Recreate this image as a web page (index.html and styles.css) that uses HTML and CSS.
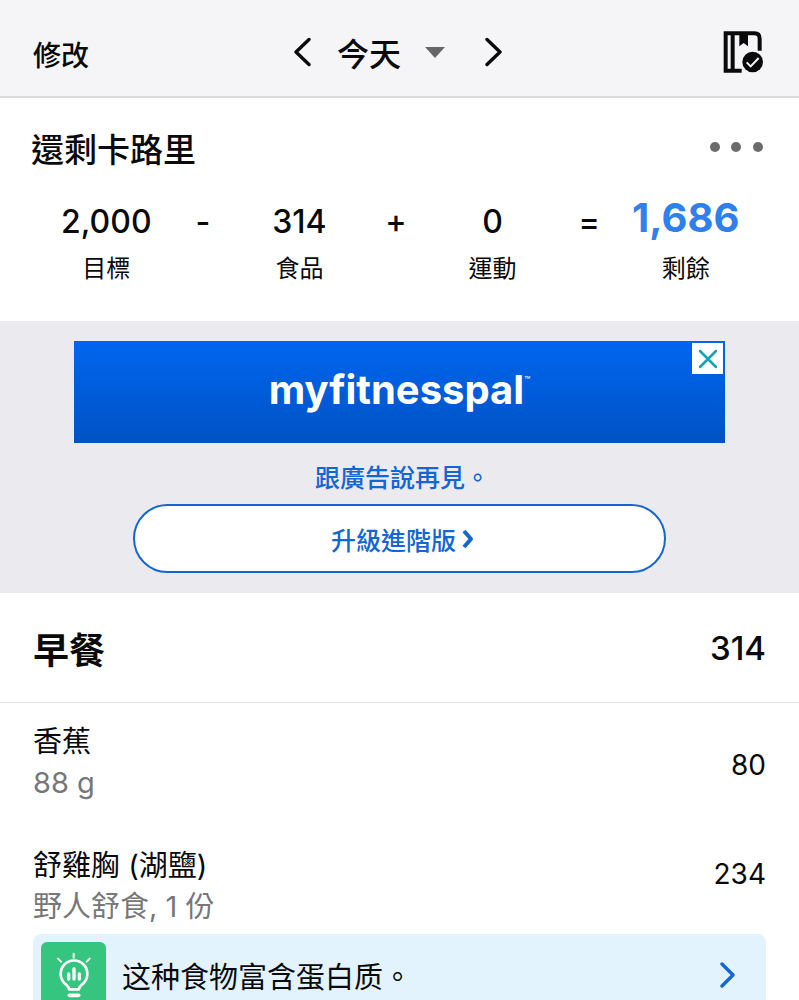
FILE: index.html
```html
<!DOCTYPE html>
<html lang="zh-Hant">
<head>
  <meta charset="UTF-8" />
  <meta name="viewport" content="width=device-width, initial-scale=1" />
  <title>日記</title>
  <link rel="stylesheet" href="styles.css">
</head>
<body>
  <header class="topbar">
    <button class="edit-btn" type="button">修改</button>
    <nav class="date-nav">
      <button type="button" aria-label="前一天">
        <svg width="18" height="30" viewBox="0 0 18 30"><path d="M16 2.500L3 15l13 12.500" fill="none" stroke="#0a0a0a" stroke-width="3.400" stroke-linecap="round" stroke-linejoin="round"/></svg>
      </button>
      <button class="date-btn" type="button">
        今天
        <svg width="20" height="11" viewBox="0 0 20 11"><path d="M0 0h20L10 11z" fill="#666"/></svg>
      </button>
      <button type="button" aria-label="後一天">
        <svg width="18" height="30" viewBox="0 0 18 30"><path d="M2 2.500L15 15 2 27.500" fill="none" stroke="#0a0a0a" stroke-width="3.400" stroke-linecap="round" stroke-linejoin="round"/></svg>
      </button>
    </nav>
    <button class="diary-btn" type="button" aria-label="完成日記">
      <svg width="40" height="42" viewBox="0 0 120 126">
        <path d="M8 7h86q16 0 16 16v36M8 1v124M29 6v114M2 119h54" fill="none" stroke="#0a0a0a" stroke-width="12"/>
        <path d="M49 8h26v38L62 36 49 46z" fill="#0a0a0a"/>
        <circle cx="89" cy="93" r="37" fill="#f5f5f7"/>
        <circle cx="89" cy="93" r="31" fill="#0a0a0a"/>
        <path d="M71 94l12 12 24-25" fill="none" stroke="#f5f5f7" stroke-width="6"/>
      </svg>
    </button>
  </header>

  <section class="summary">
    <div class="summary-head">
      <h2>還剩卡路里</h2>
      <button class="more-btn" type="button" aria-label="更多">
        <svg width="54" height="10" viewBox="0 0 54 10" fill="#6b6b6b"><circle cx="5" cy="5" r="5"/><circle cx="26" cy="5" r="5"/><circle cx="48" cy="5" r="5"/></svg>
      </button>
    </div>
    <div class="equation">
      <div class="stat"><strong>2,000</strong><span>目標</span></div>
      <span class="op">-</span>
      <div class="stat"><strong>314</strong><span>食品</span></div>
      <span class="op">+</span>
      <div class="stat"><strong>0</strong><span>運動</span></div>
      <span class="op">=</span>
      <div class="stat left"><strong>1,686</strong><span>剩餘</span></div>
    </div>
  </section>

  <section class="promo">
    <div class="banner">
      <span class="brand">myfitnesspal<sup>™</sup></span>
      <button class="close-btn" type="button" aria-label="關閉廣告">
        <svg width="20" height="20" viewBox="0 0 20 20"><path d="M2 2l16 16M18 2L2 18" stroke="#13a3b5" stroke-width="2.500" stroke-linecap="round"/></svg>
      </button>
    </div>
    <p>跟廣告說再見。</p>
    <button class="upgrade-btn" type="button">
      升級進階版
      <svg width="12" height="20" viewBox="0 0 12 20"><path d="M2 2l7 8-7 8" fill="none" stroke="#1467d2" stroke-width="4" stroke-linejoin="round"/></svg>
    </button>
  </section>

  <main class="meal">
    <div class="meal-head">
      <h2>早餐</h2>
      <span>314</span>
    </div>
    <div class="food">
      <div class="food-text">
        <h3>香蕉</h3>
        <p>88 g</p>
      </div>
      <span class="food-cal">80</span>
    </div>
    <div class="food with-tip">
      <div class="food-text">
        <h3>舒雞胸 (湖鹽)</h3>
        <p>野人舒食, 1 份</p>
      </div>
      <span class="food-cal">234</span>
    </div>
    <button class="tip" type="button">
      <span class="tip-icon">
        <svg width="36" height="46" viewBox="0 0 108 138" fill="none" stroke="#fff" stroke-width="8" stroke-linecap="round">
          <path d="M53 5v12M6 20l9 9M101 20l-9 9" stroke-width="6"/>
          <path d="M39 112c0-8-5-10-12-17a40 40 0 1 1 54 0c-7 7-12 9-12 17z" stroke-linejoin="round"/>
          <path d="M38 66v15M54 50v31M70 66v15" stroke-width="10"/>
          <path d="M40 130h28" stroke-width="11"/>
        </svg>
      </span>
      <span class="tip-text">这种食物富含蛋白质。</span>
      <svg width="16" height="26" viewBox="0 0 16 26"><path d="M2 2l11 11L2 24" fill="none" stroke="#1467d2" stroke-width="3.400" stroke-linecap="round" stroke-linejoin="round"/></svg>
    </button>
  </main>
</body>
</html>
```
FILE: styles.css
```css
:root {
  --ink: #0a0a0a;
  --muted: #777;
  --blue: #1467d2;
  --bar: #f5f5f7;
}
* {
  box-sizing: border-box;
}
body {
  margin: 0;
  background: #fff;
  color: var(--ink);
  font-family: Inter, "Noto Sans CJK TC", sans-serif;
}
h2, h3, p {
  margin: 0;
}
button {
  padding: 0;
  border: none;
  background: none;
  color: inherit;
  font: inherit;
  cursor: pointer;
}
svg {
  display: block;
}

/* top bar */
.topbar {
  display: grid;
  grid-template-columns: 1fr auto 1fr;
  align-items: center;
  height: 98px;
  padding: 8px 36px 0 33px;
  background: var(--bar);
  border-bottom: 2px solid #dcdcde;
}
.edit-btn {
  justify-self: start;
  padding-top: 4px;
  font-size: 28px;
  font-weight: 500;
}
.date-nav {
  display: flex;
  align-items: center;
  gap: 26px;
}
.date-nav button {
  display: flex;
  align-items: center;
}
.date-nav .date-btn {
  gap: 24px;
  margin-right: 14px;
  font-size: 32px;
  font-weight: 500;
}
.diary-btn {
  justify-self: end;
}

/* calories left */
.summary {
  height: 223px;
  padding-top: 28px;
}
.summary-head {
  display: flex;
  justify-content: space-between;
  align-items: center;
  padding: 0 35px 0 31px;
}
.summary h2 {
  font-size: 33px;
  font-weight: 500;
  line-height: 48px;
}
.more-btn {
  padding-bottom: 6px;
}
.equation {
  display: grid;
  grid-template-columns: repeat(7, minmax(0, 1fr));
  justify-items: center;
  padding: 22px 65px 0 58px;
}
.stat {
  display: flex;
  flex-direction: column;
  align-items: center;
}
.stat strong, .op {
  font-size: 32px;
  font-weight: 500;
  line-height: 52px;
}
.stat span {
  font-size: 24px;
  line-height: 42px;
}
.stat.left strong {
  color: #2f80ed;
  font-size: 40px;
  font-weight: 700;
  line-height: 44px;
  padding-bottom: 8px;
}

/* ad */
.promo {
  display: flex;
  flex-direction: column;
  align-items: center;
  padding: 20px 74px;
  background: #eaeaef;
}
.banner {
  position: relative;
  display: flex;
  justify-content: center;
  align-items: center;
  width: 100%;
  height: 102px;
  padding-bottom: 6px;
  background: linear-gradient(#0066f0, #0052c4);
}
.brand {
  color: #fff;
  font-size: 40px;
  font-weight: 700;
}
.brand sup {
  font-size: 10px;
  font-weight: 400;
  vertical-align: 20px;
  line-height: 1;
}
.close-btn {
  position: absolute;
  top: 2px;
  right: 2px;
  display: grid;
  place-items: center;
  width: 31px;
  height: 31px;
  background: #fff;
}
.promo p, .upgrade-btn {
  padding-left: 6px;
  color: var(--blue);
  font-size: 25px;
  font-weight: 500;
}
.promo p {
  margin: 17px 0 8px;
  line-height: 36px;
}
.upgrade-btn {
  display: flex;
  justify-content: center;
  align-items: center;
  gap: 6px;
  width: 82%;
  height: 69px;
  border: 2px solid var(--blue);
  border-radius: 35px;
  background: #fff;
}

/* meal */
.meal-head {
  display: flex;
  justify-content: space-between;
  align-items: center;
  height: 110px;
  padding: 0 33px;
  border-bottom: 1px solid #e0e0e0;
}
.meal-head h2 {
  font-size: 36px;
  font-weight: 700;
}
.meal-head span {
  font-size: 33px;
  font-weight: 500;
}
.food {
  display: flex;
  justify-content: space-between;
  align-items: center;
  padding: 0 33px;
}
.food-text {
  padding: 18px 0 24px;
}
.food h3 {
  font-size: 29px;
  font-weight: 400;
  line-height: 41px;
}
.food p {
  color: var(--muted);
  font-size: 29px;
  line-height: 41px;
}
.food-cal {
  font-size: 28px;
}
.with-tip .food-text {
  padding-bottom: 7px;
}
.with-tip .food-cal {
  padding-bottom: 14px;
}
.tip {
  display: flex;
  align-items: center;
  gap: 16px;
  width: calc(100% - 66px);
  margin: 0 33px;
  padding: 8px 30px 8px 8px;
  border-radius: 8px;
  background: #e2f3fe;
  font-size: 29px;
  text-align: left;
}
.tip-icon {
  display: grid;
  place-items: center;
  width: 65px;
  height: 65px;
  border-radius: 6px;
  background: #36c57e;
}
.tip-text {
  flex: 1;
}
```
